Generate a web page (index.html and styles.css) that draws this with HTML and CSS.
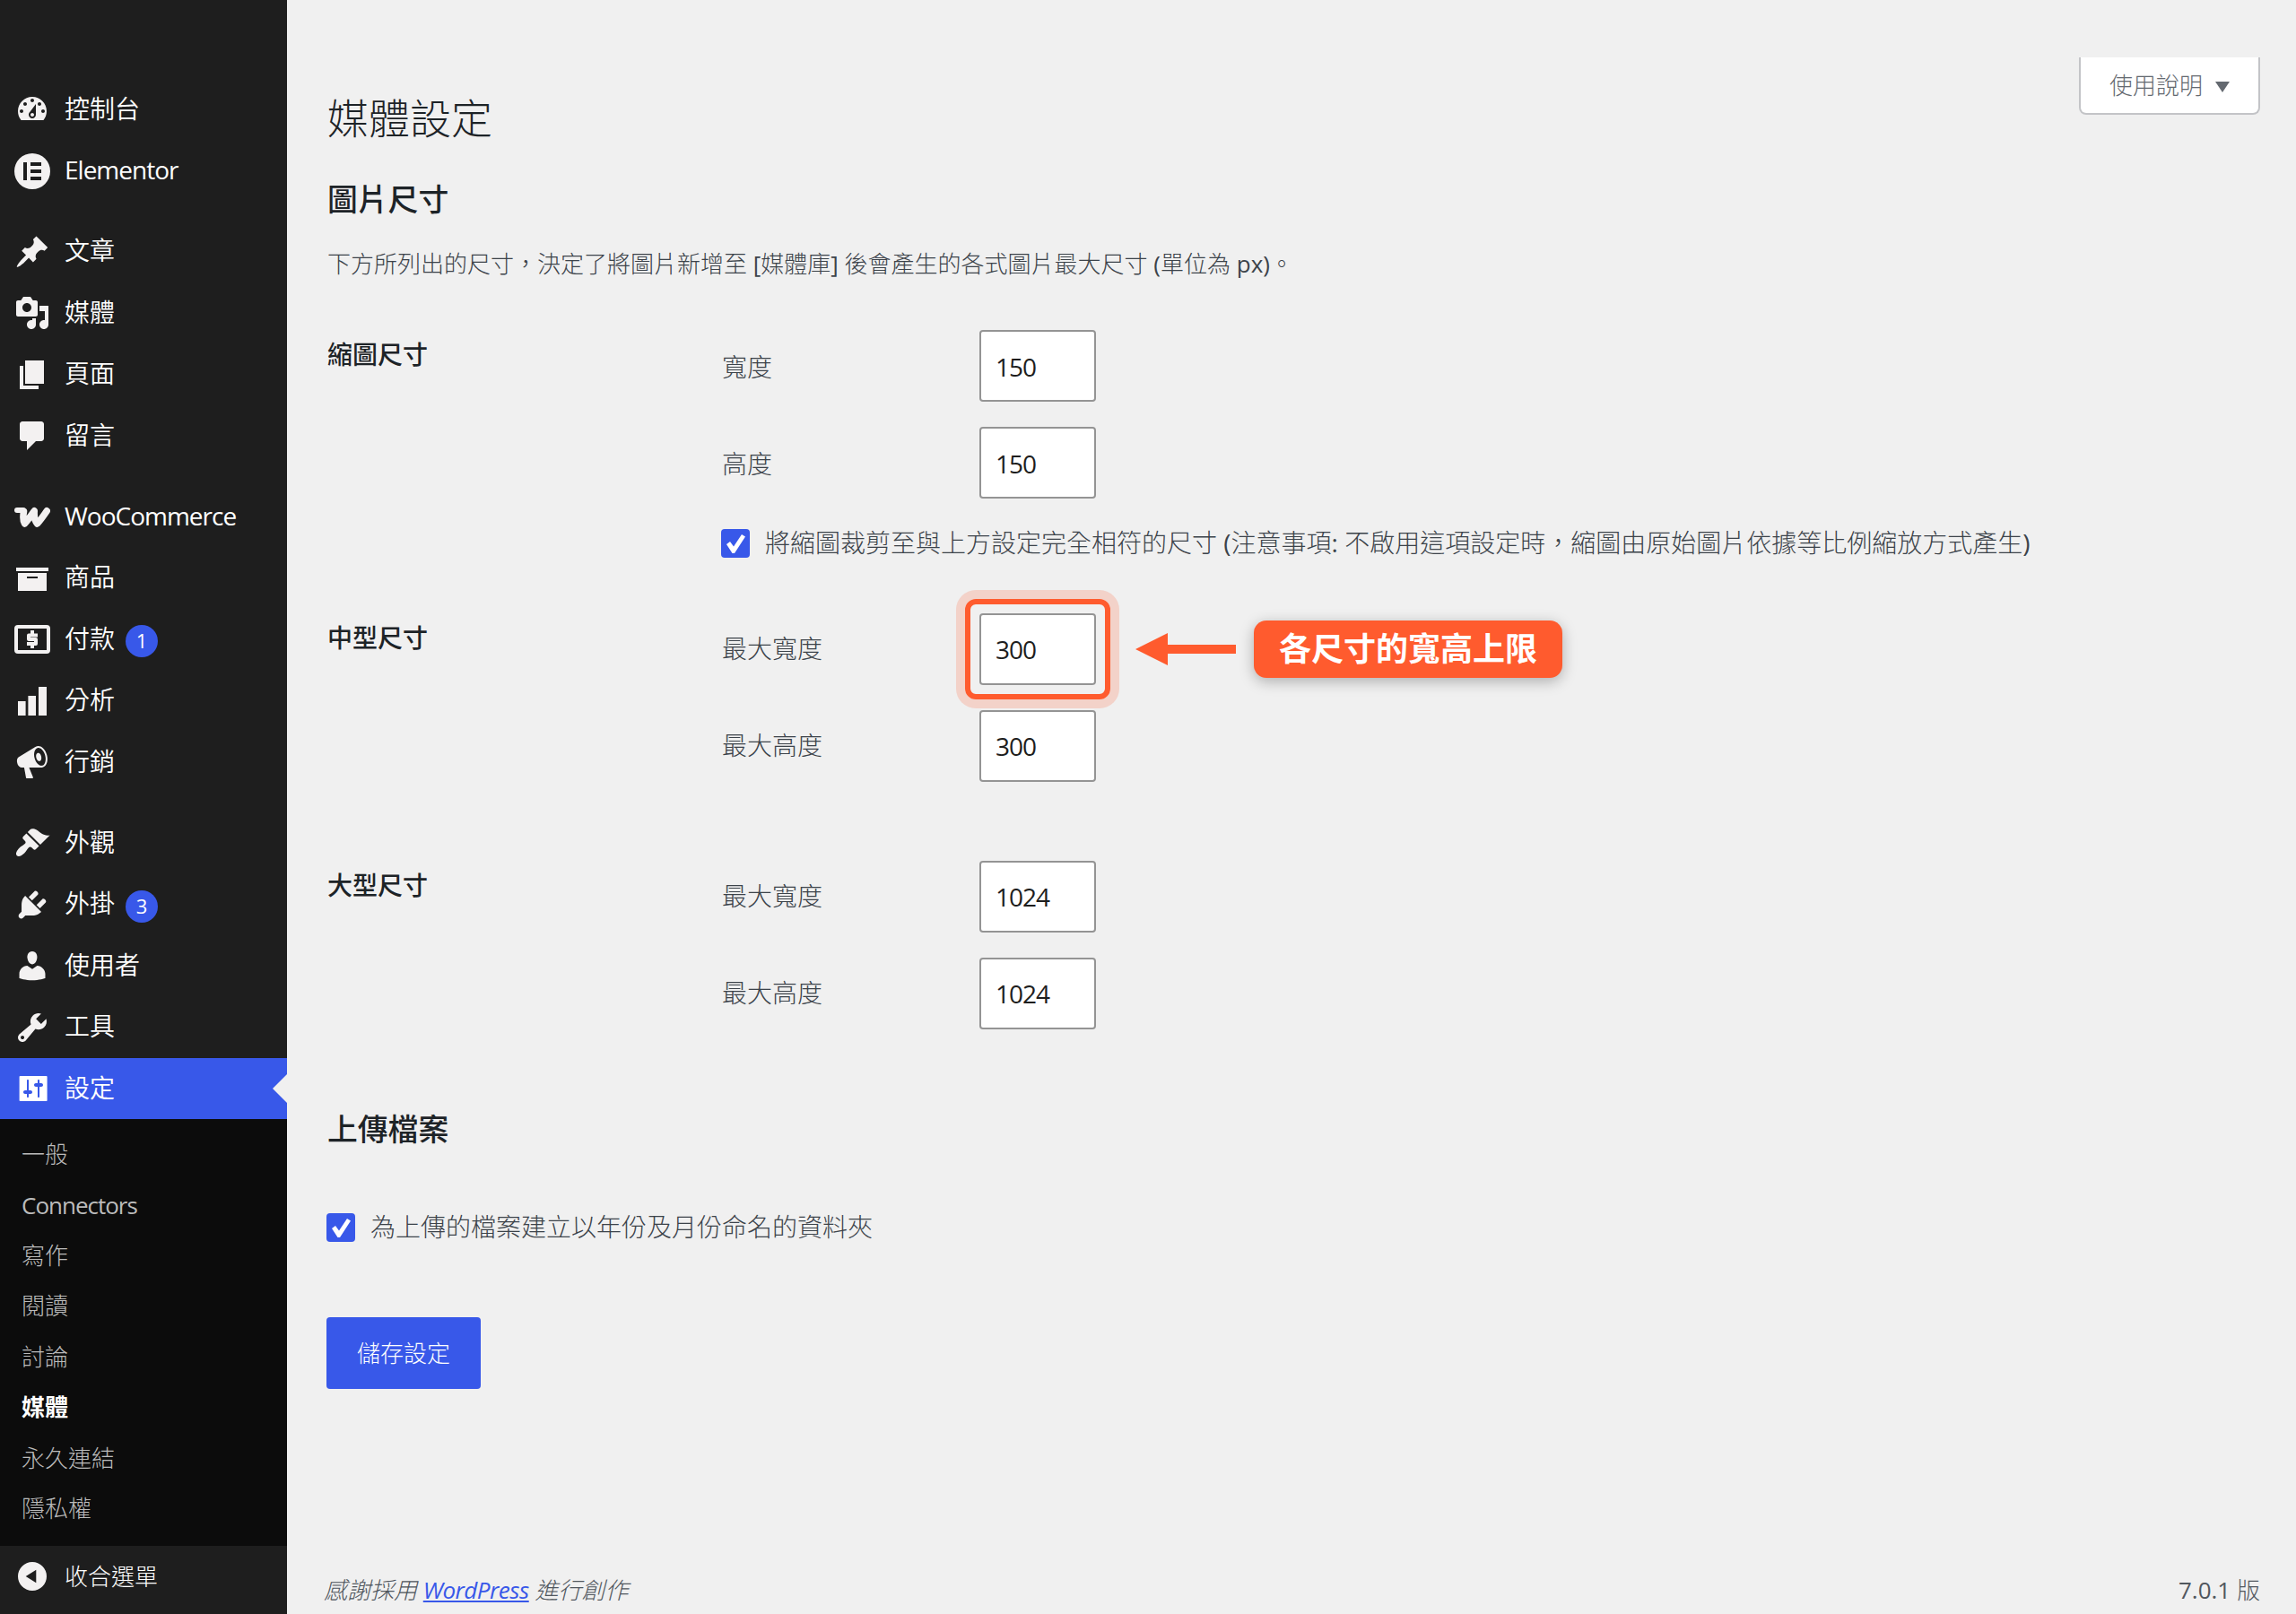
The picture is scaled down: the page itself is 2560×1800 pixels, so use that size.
FILE: index.html
```
<!doctype html>
<html lang="zh-Hant">
<head>
	<meta charset="utf-8">
	<title>媒體設定</title>
	<link rel="stylesheet" href="styles.css">
</head>
<body>
	<nav class="sidebar">
		<ul class="menu">
			<li><a><svg viewBox="0 0 20 20"><path d="M3.76 16h12.48c1.1-1.37 1.76-3.11 1.76-5 0-4.42-3.58-8-8-8s-8 3.58-8 8c0 1.89.66 3.63 1.76 5zM10 4c.55 0 1 .45 1 1s-.45 1-1 1-1-.45-1-1 .45-1 1-1zM6 6c.55 0 1 .45 1 1s-.45 1-1 1-1-.45-1-1 .45-1 1-1zm8 0c.55 0 1 .45 1 1s-.45 1-1 1-1-.45-1-1 .45-1 1-1zm-5.37 5.55L12 7v6c0 1.1-.9 2-2 2s-2-.9-2-2c0-.57.24-1.08.63-1.45zM4 10c.55 0 1 .45 1 1s-.45 1-1 1-1-.45-1-1 .45-1 1-1zm12 0c.55 0 1 .45 1 1s-.45 1-1 1-1-.45-1-1 .45-1 1-1zm-5 3c0-.55-.45-1-1-1s-1 .45-1 1 .45 1 1 1 1-.45 1-1z"/></svg><span>控制台</span></a></li>
			<li><a><svg viewBox="0 0 40 40"><path fill-rule="evenodd" d="M20 0a20 20 0 1 0 0 40 20 20 0 0 0 0-40zM10 10h4v20h-4zM18 10h12v4H18zM18 18h12v4H18zM18 26h12v4H18z"/></svg><span class="latin">Elementor</span></a></li>
			<li class="sep"></li>
			<li><a><svg viewBox="0 0 20 20"><path d="M10.44 3.02l1.82-1.82 6.36 6.35-1.83 1.82c-1.05-.68-2.48-.57-3.41.36l-.75.75c-.92.93-1.04 2.35-.35 3.41l-1.83 1.82-2.41-2.41-2.8 2.79c-.42.42-3.38 2.71-3.8 2.29s1.86-3.39 2.28-3.81l2.79-2.79L4.1 9.36l1.83-1.82c1.05.69 2.48.57 3.4-.36l.75-.75c.93-.92 1.05-2.35.36-3.41z"/></svg><span>文章</span></a></li>
			<li><a><svg viewBox="0 0 20 20"><path d="M13 11V4c0-.55-.45-1-1-1h-1.67L9 1H5L3.67 3H2c-.55 0-1 .45-1 1v7c0 .55.45 1 1 1h10c.55 0 1-.45 1-1zM7 4.5c1.38 0 2.5 1.12 2.5 2.5S8.38 9.5 7 9.5 4.5 8.38 4.5 7 5.62 4.5 7 4.5zM14 6h5v10.5c0 1.38-1.12 2.5-2.5 2.5S14 17.88 14 16.5s1.12-2.5 2.5-2.5c.17 0 .34.02.5.05V9h-3V6zm-4 8.05V13h2v3.5c0 1.38-1.12 2.5-2.5 2.5S7 17.88 7 16.5 8.12 14 9.5 14c.17 0 .34.02.5.05z"/></svg><span>媒體</span></a></li>
			<li><a><svg viewBox="0 0 20 20"><path d="M6 15V2h10.500v13H6zm-1 1h8.500v2H3V5h2v11z"/></svg><span>頁面</span></a></li>
			<li><a><svg viewBox="0 0 20 20"><path d="M4.500 2h10.500c.83 0 1.500.67 1.500 1.500v8c0 .83-.67 1.500-1.500 1.500h-3l-5 5v-5H4.500c-.83 0-1.500-.67-1.500-1.500v-8C3 2.670 3.670 2 4.500 2z"/></svg><span>留言</span></a></li>
			<li class="sep"></li>
			<li><a><svg viewBox="0 0 40 40"><path class="stroke" stroke-width="6" d="M3 12h7"/><path class="stroke" stroke-width="7.500" d="M10.500 13.500C9.500 19 9.500 23.500 11.500 27c4-4.500 7.500-9.500 10.800-14.200C21.800 19 22.500 23.500 25.500 27c4-4.500 7.500-9.500 10.700-14.200"/></svg><span class="latin">WooCommerce</span></a></li>
			<li><a><svg viewBox="0 0 20 20"><path d="M19 4v2H1V4h18zM2 7h16v10H2V7zm11 3V9H7v1h6z"/></svg><span>商品</span></a></li>
			<li><a><svg viewBox="0 0 40 40"><rect class="stroke" x="2" y="6" width="36" height="28" rx="2" stroke-width="4"/><path class="stroke butt" stroke-width="4" d="M26 15.500H16v4.500h8v5H14M20 10v5M20 25v5"/></svg><span>付款</span><b class="badge">1</b></a></li>
			<li><a><svg viewBox="0 0 20 20"><path d="M18 18V2h-4.500v16H18zm-6 0V7H7.700v11H12zm-5.700 0v-8H2v8h4.300z"/></svg><span>分析</span></a></li>
			<li><a><svg viewBox="0 0 20 20"><path d="M18.150 5.940c.46 1.620.38 3.220-.02 4.480-.42 1.280-1.260 2.180-2.300 2.480-.16.06-.26.06-.4.06-.06.02-.12.02-.18.02-.06.02-.14.02-.22.02h-6.800l2.220 5.500c.02.14-.06.26-.14.34-.08.1-.24.16-.34.16H6.950c-.1 0-.26-.06-.34-.16-.08-.08-.16-.2-.14-.34l-1-5.500H4.250l-.02-.02c-.5.06-1.080-.18-1.540-.62s-.88-1.080-1.060-1.880c-.24-.8-.2-1.560-.02-2.200.18-.62.58-1.080 1.060-1.300l.02-.02 9-5.400c.1-.06.18-.1.24-.16.06-.04.14-.08.24-.12.16-.08.28-.12.5-.18 1.040-.3 2.240.1 3.220.98s1.840 2.240 2.260 3.860zm-2.580 5.980h-.02c.4-.1.74-.34 1.040-.7.58-.7.86-1.760.86-3.040 0-.64-.1-1.300-.28-1.980-.34-1.360-1.020-2.500-1.780-3.240s-1.680-1.100-2.460-.88c-.82.22-1.400.96-1.700 2-.32 1.040-.28 2.360.06 3.720.38 1.360 1 2.500 1.800 3.240.78.74 1.620 1.100 2.480.88zm-2.540-7.080c.22-.04.42-.02.62.04.38.16.76.48 1.020 1s.42 1.200.42 1.780c0 .3-.04.56-.12.8-.18.48-.44.84-.86.94-.34.1-.8-.06-1.140-.4s-.64-.86-.78-1.500c-.18-.62-.12-1.240.02-1.720s.48-.84.82-.94z"/></svg><span>行銷</span></a></li>
			<li class="sep"></li>
			<li><a><svg viewBox="0 0 20 20"><path d="M14.480 11.060L7.410 3.990l1.500-1.500c.5-.56 2.300-.47 3.510.32 1.210.8 1.430 1.280 2.910 2.100 1.180.64 2.450 1.260 4.450.85zm-.71.71L6.700 4.700 4.930 6.470c-.39.39-.39 1.020 0 1.410l1.060 1.060c.39.39.39 1.030 0 1.420-.6.6-1.430 1.110-2.210 1.690-.35.26-.7.53-1.010.84C1.430 14.230.4 16.080 1.400 17.070c.99 1 2.840-.03 4.180-1.360.31-.31.58-.66.85-1.020.57-.78 1.080-1.610 1.690-2.210.39-.39 1.020-.39 1.410 0l1.060 1.060c.39.39 1.020.39 1.410 0z"/></svg><span>外觀</span></a></li>
			<li><a><svg viewBox="0 0 20 20"><path d="M13.110 4.360L9.870 7.600 8 5.730l3.240-3.240c.35-.34 1.050-.2 1.560.32.52.51.66 1.210.31 1.550zm-8 1.770l.91-1.120 9.010 9.010-1.190.84c-.71.71-2.630 1.160-3.820 1.160H6.140L4.900 17.260c-.59.59-1.540.59-2.120 0-.59-.58-.59-1.530 0-2.120l1.240-1.240v-3.880c0-1.130.4-3.190 1.090-3.890zm7.260 3.970l3.240-3.240c.34-.35 1.040-.21 1.550.31.52.51.66 1.210.31 1.550l-3.240 3.250z"/></svg><span>外掛</span><b class="badge">3</b></a></li>
			<li><a><svg viewBox="0 0 20 20"><path d="M10 9.250c-2.270 0-2.730-3.440-2.730-3.440C7 4.020 7.820 2 9.970 2c2.160 0 2.980 2.020 2.710 3.810 0 0-.41 3.440-2.680 3.440zm0 2.570L12.720 10c2.390 0 4.520 2.330 4.520 4.530v2.490s-3.650 1.130-7.240 1.130c-3.650 0-7.240-1.130-7.240-1.130v-2.490c0-2.250 1.940-4.480 4.470-4.480z"/></svg><span>使用者</span></a></li>
			<li><a><svg viewBox="0 0 20 20"><path d="M16.680 9.770c-1.340 1.340-3.300 1.670-4.950.99l-5.410 6.520c-.99.99-2.590.99-3.580 0s-.99-2.590 0-3.570l6.520-5.420c-.68-1.650-.35-3.610.99-4.950 1.280-1.280 3.120-1.620 4.720-1.060l-2.890 2.890 2.820 2.820 2.860-2.870c.53 1.580.18 3.390-1.080 4.650zM3.810 16.210c.4.39 1.040.39 1.430 0 .4-.4.4-1.040 0-1.430-.39-.4-1.030-.4-1.430 0-.39.39-.39 1.030 0 1.430z"/></svg><span>工具</span></a></li>
			<li class="current"><a><svg viewBox="0 0 20 20"><path d="M18.300 16.500v-13c0-.28-.22-.5-.5-.5H3.300c-.28 0-.5.22-.5.5v13c0 .28.22.5.5.5h14.500c.28 0 .5-.22.5-.5zM8 11h1c.55 0 1 .45 1 1s-.45 1-1 1H8v1.500c0 .28-.22.5-.5.5s-.5-.22-.5-.5V13H6c-.55 0-1-.45-1-1s.45-1 1-1h1V5.500c0-.28.22-.5.5-.5s.5.22.5.5V11zm5-2h-1c-.55 0-1-.45-1-1s.45-1 1-1h1V5.500c0-.28.22-.5.5-.5s.5.22.5.5V7h1c.55 0 1 .45 1 1s-.45 1-1 1h-1v5.500c0 .28-.22.5-.5.5s-.5-.22-.5-.5V9z"/></svg><span>設定</span></a></li>
		</ul>
		<ul class="submenu">
			<li>一般</li>
			<li class="latin">Connectors</li>
			<li>寫作</li>
			<li>閱讀</li>
			<li>討論</li>
			<li class="active">媒體</li>
			<li>永久連結</li>
			<li>隱私權</li>
		</ul>
		<a class="collapse"><svg viewBox="0 0 40 40"><path fill-rule="evenodd" d="M20 4a16 16 0 1 0 0 32 16 16 0 0 0 0-32zM24.300 12.800v14.400L12.700 20z"/></svg><span>收合選單</span></a>
	</nav>

	<main class="content">
		<div class="help">使用說明<svg viewBox="0 0 16 12"><path d="M0 0h16L8 12z"/></svg></div>

		<h1>媒體設定</h1>
		<h2>圖片尺寸</h2>
		<p class="intro">下方所列出的尺寸，決定了將圖片新增至 <span class="en">[</span>媒體庫<span class="en">]</span> 後會產生的各式圖片最大尺寸 <span class="en">(</span>單位為 <span class="en">px)</span>。</p>

		<section class="group thumb">
			<h3>縮圖尺寸</h3>
			<div class="fields">
				<div class="field"><label>寬度</label><input type="text" value="150"></div>
				<div class="field"><label>高度</label><input type="text" value="150"></div>
				<div class="check"><i class="box"><svg viewBox="0 0 32 32"><path d="M6 17l4-3 4 5.500L23 6l4 2.500-12 18.500h-2.500z"/></svg></i><span>將縮圖裁剪至與上方設定完全相符的尺寸 <span class="en">(</span>注意事項<span class="en">:</span> 不啟用這項設定時，縮圖由原始圖片依據等比例縮放方式產生<span class="en">)</span></span></div>
			</div>
		</section>

		<section class="group medium">
			<h3>中型尺寸</h3>
			<div class="fields">
				<div class="field">
					<label>最大寬度</label>
					<div class="marked">
						<input type="text" value="300">
						<div class="ring"></div>
						<div class="callout">
							<svg viewBox="0 0 112 36"><path d="M0 18L36 0v13h76v10H36v13z"/></svg>
							<strong>各尺寸的寬高上限</strong>
						</div>
					</div>
				</div>
				<div class="field"><label>最大高度</label><input type="text" value="300"></div>
			</div>
		</section>

		<section class="group large">
			<h3>大型尺寸</h3>
			<div class="fields">
				<div class="field"><label>最大寬度</label><input type="text" value="1024"></div>
				<div class="field"><label>最大高度</label><input type="text" value="1024"></div>
			</div>
		</section>

		<h2 class="upload">上傳檔案</h2>
		<div class="check"><i class="box"><svg viewBox="0 0 32 32"><path d="M6 17l4-3 4 5.500L23 6l4 2.500-12 18.500h-2.500z"/></svg></i><span>為上傳的檔案建立以年份及月份命名的資料夾</span></div>
		<button class="save">儲存設定</button>

		<footer>
			<em>感謝採用 <a href="#">WordPress</a> 進行創作</em>
			<span><span class="en">7.0.1</span> 版</span>
		</footer>
	</main>
</body>
</html>
```
FILE: styles.css
```
* { box-sizing: border-box; margin: 0; padding: 0; }

body {
	display: flex;
	height: 1800px;
	overflow: hidden;
	background: #f0f0f0;
	color: #3c434a;
	font: 300 28px/40px "Open Sans", "Noto Sans CJK TC", sans-serif;
}
ul { list-style: none; }
svg { display: block; fill: currentColor; }
.stroke { fill: none; stroke: currentColor; stroke-linecap: round; stroke-linejoin: round; }
.butt { stroke-linecap: butt; }
.en { font-weight: 400; }

/* sidebar */
.sidebar { width: 320px; padding-top: 88px; background: #1e1e1e; color: #fff; font-weight: 350; flex: none; }
.menu a, .collapse { display: flex; align-items: center; height: 68.4px; padding-left: 16px; }
.menu svg, .collapse svg { width: 40px; height: 40px; margin-right: 16px; color: #f3f1f1; }
.menu span { margin-top: -3px; }
.menu .sep { height: 22px; }
.latin { font-weight: 400; letter-spacing: -1px; }
.badge {
	width: 36px; height: 36px; margin: 4px 0 0 12px;
	border-radius: 50%; background: #3858e9;
	font-size: 22px; font-weight: 400; line-height: 35px; text-align: center;
}
.menu .current a { position: relative; background: #3858e9; }
.menu .current svg { color: #fff; }
.current a:after {
	content: ""; position: absolute; right: 0; top: 18px;
	border: 16px solid transparent; border-left-width: 0; border-right-color: #f0f0f0;
}
.submenu { height: 475.600px; padding: 11px 24px; background: #0c0c0c; color: #bbb; font-size: 26px; font-weight: 300; }
.submenu li { height: 56.400px; line-height: 56.400px; }
.submenu .latin { font-weight: 400; }
.submenu .active { color: #fff; font-weight: 700; }
.collapse { font-size: 26px; font-weight: 300; }

/* content */
.content { flex: 1; display: flex; flex-direction: column; align-items: flex-start; padding: 64px 40px 0 44px; }
.help {
	display: flex; align-items: center; align-self: flex-end;
	width: 202px; height: 64px; padding-left: 32px;
	border: 2px solid #c3c4c7; border-top: 0; border-radius: 0 0 8px 8px;
	background: #fff; color: #646970; font-size: 26px;
}
.help svg { width: 16px; height: 12px; margin: 3px 0 0 14px; }
h1, h2, h3 { color: #1d2327; }
h1, h2, h3, .intro { padding-left: 1px; }
h1 { height: 60px; margin-top: -27px; font-size: 46px; font-weight: 300; line-height: 60px; }
h2 { height: 44px; margin-top: 39px; font-size: 33.800px; font-weight: 500; line-height: 44px; }
.intro { height: 40px; margin-top: 30px; font-size: 26px; }

.group { display: flex; }
.group h3 { width: 440px; padding-top: 7px; font-size: 28px; font-weight: 500; }
.thumb { margin-top: 54px; }
.medium { margin-top: 62px; }
.large { margin-top: 88px; }
.fields { display: flex; flex-direction: column; gap: 28px; }
.field { display: flex; align-items: center; height: 80px; }
.field label { width: 288px; padding-left: 1px; margin-top: -2px; }
.thumb .field label { margin-top: 2px; }
input {
	display: block; width: 130px; height: 80px; padding: 0 16px;
	border: 2px solid #949494; border-radius: 4px;
	background: #fff; color: #1e1e1e; font: 400 28px "Open Sans", sans-serif; letter-spacing: -1px;
}
.thumb input { padding-top: 2px; }
.check { display: flex; align-items: center; height: 32px; white-space: nowrap; }
.check > span { margin-top: -3px; }
.thumb .check { margin-top: 6px; }
.box { width: 32px; height: 32px; margin-right: 17px; border-radius: 4px; background: #3858e9; color: #fff; }

/* annotation over the medium width field */
.marked { position: relative; }
.ring {
	position: absolute; inset: -16px;
	border: 6px solid #ff5b2e; border-radius: 12px;
	box-shadow: 0 0 0 10px rgba(255, 91, 46, .2);
}
.callout { position: absolute; left: 174px; top: 8px; display: flex; align-items: center; gap: 20px; color: #ff5b2e; }
.callout svg { width: 112px; height: 36px; }
.callout strong {
	width: 344px; height: 64px; border-radius: 14px;
	background: #ff5b2e; color: #fff; box-shadow: 0 4px 16px rgba(0, 0, 0, .28);
	font-size: 36px; font-weight: 700; line-height: 64px; text-align: center;
}

.upload { margin-top: 89px; }
.upload + .check { margin-top: 72px; }
.save { width: 172px; height: 80px; margin-top: 84px; border: 0; border-radius: 4px; background: #3858e9; color: #fff; font: inherit; font-size: 26px; }
footer { display: flex; justify-content: space-between; align-self: stretch; margin: 204px 0 0 -3px; color: #50575e; font-size: 26px; }
footer a { color: #3858e9; font-weight: 400; letter-spacing: -0.5px; }
```
